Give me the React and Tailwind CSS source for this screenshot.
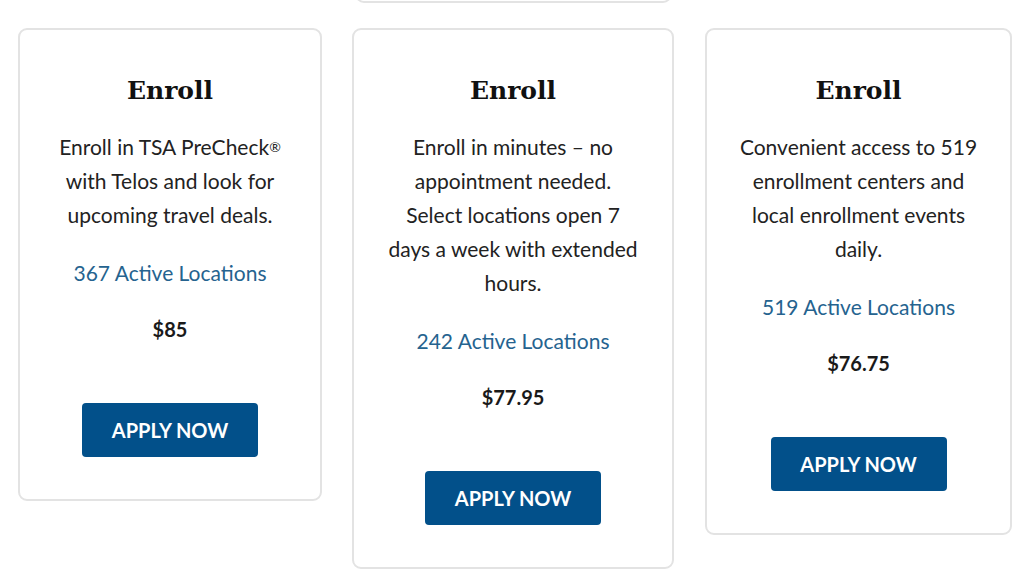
export default function App() {
  const body = "font-['Lato','Liberation_Sans',sans-serif]";
  const Card = ({ w, lines, link, price }) => (
    <div className={`w-[${w}px] rounded-[9px] border-2 border-[#e3e3e3] bg-white flex flex-col items-center pt-[41px] pb-[42px]`}>
      <h2 className="font-['DejaVu_Serif',serif] font-bold text-[25px] leading-[40px] text-[#111]">Enroll</h2>
      <p className={`${body} mt-[19px] text-[21px] leading-[34px] text-[#222] text-center`}>
        {lines.map((l, i) => (
          <span key={i} className="block">{l}</span>
        ))}
      </p>
      <div className={`${body} mt-[24px] text-[21px] leading-[34px] text-[#25638f]`}>{link}</div>
      <div className={`${body} mt-[22px] text-[20px] leading-[34px] font-bold text-[#1a1a1a]`}>{price}</div>
      <button className={`${body} mt-[57px] w-[176px] h-[54px] rounded-[4px] bg-[#02508a] text-white text-[20px] font-bold`}>APPLY NOW</button>
    </div>
  );
  return (
    <div className="w-[1024px] h-[576px] overflow-hidden bg-white flex items-start pl-[18px] pt-[28px]">
      <div className="w-[304px] shrink-0">
        <Card
          w={304}
          lines={[<>Enroll in TSA PreCheck<sup className="text-[14px] relative top-[-3px]">®</sup></>, "with Telos and look for", "upcoming travel deals."]}
          link="367 Active Locations"
          price="$85"
        />
      </div>
      <div className="w-[322px] shrink-0 ml-[30px] flex flex-col gap-[25px] mt-[-125px]">
        <div className="ml-[3px] w-[317px] h-[100px] rounded-[9px] border-2 border-[#e3e3e3] bg-white"></div>
        <Card
          w={322}
          lines={["Enroll in minutes – no", "appointment needed.", "Select locations open 7", "days a week with extended", "hours."]}
          link="242 Active Locations"
          price="$77.95"
        />
      </div>
      <div className="w-[307px] shrink-0 ml-[31px]">
        <Card
          w={307}
          lines={["Convenient access to 519", "enrollment centers and", "local enrollment events", "daily."]}
          link="519 Active Locations"
          price="$76.75"
        />
      </div>
    </div>
  );
}
